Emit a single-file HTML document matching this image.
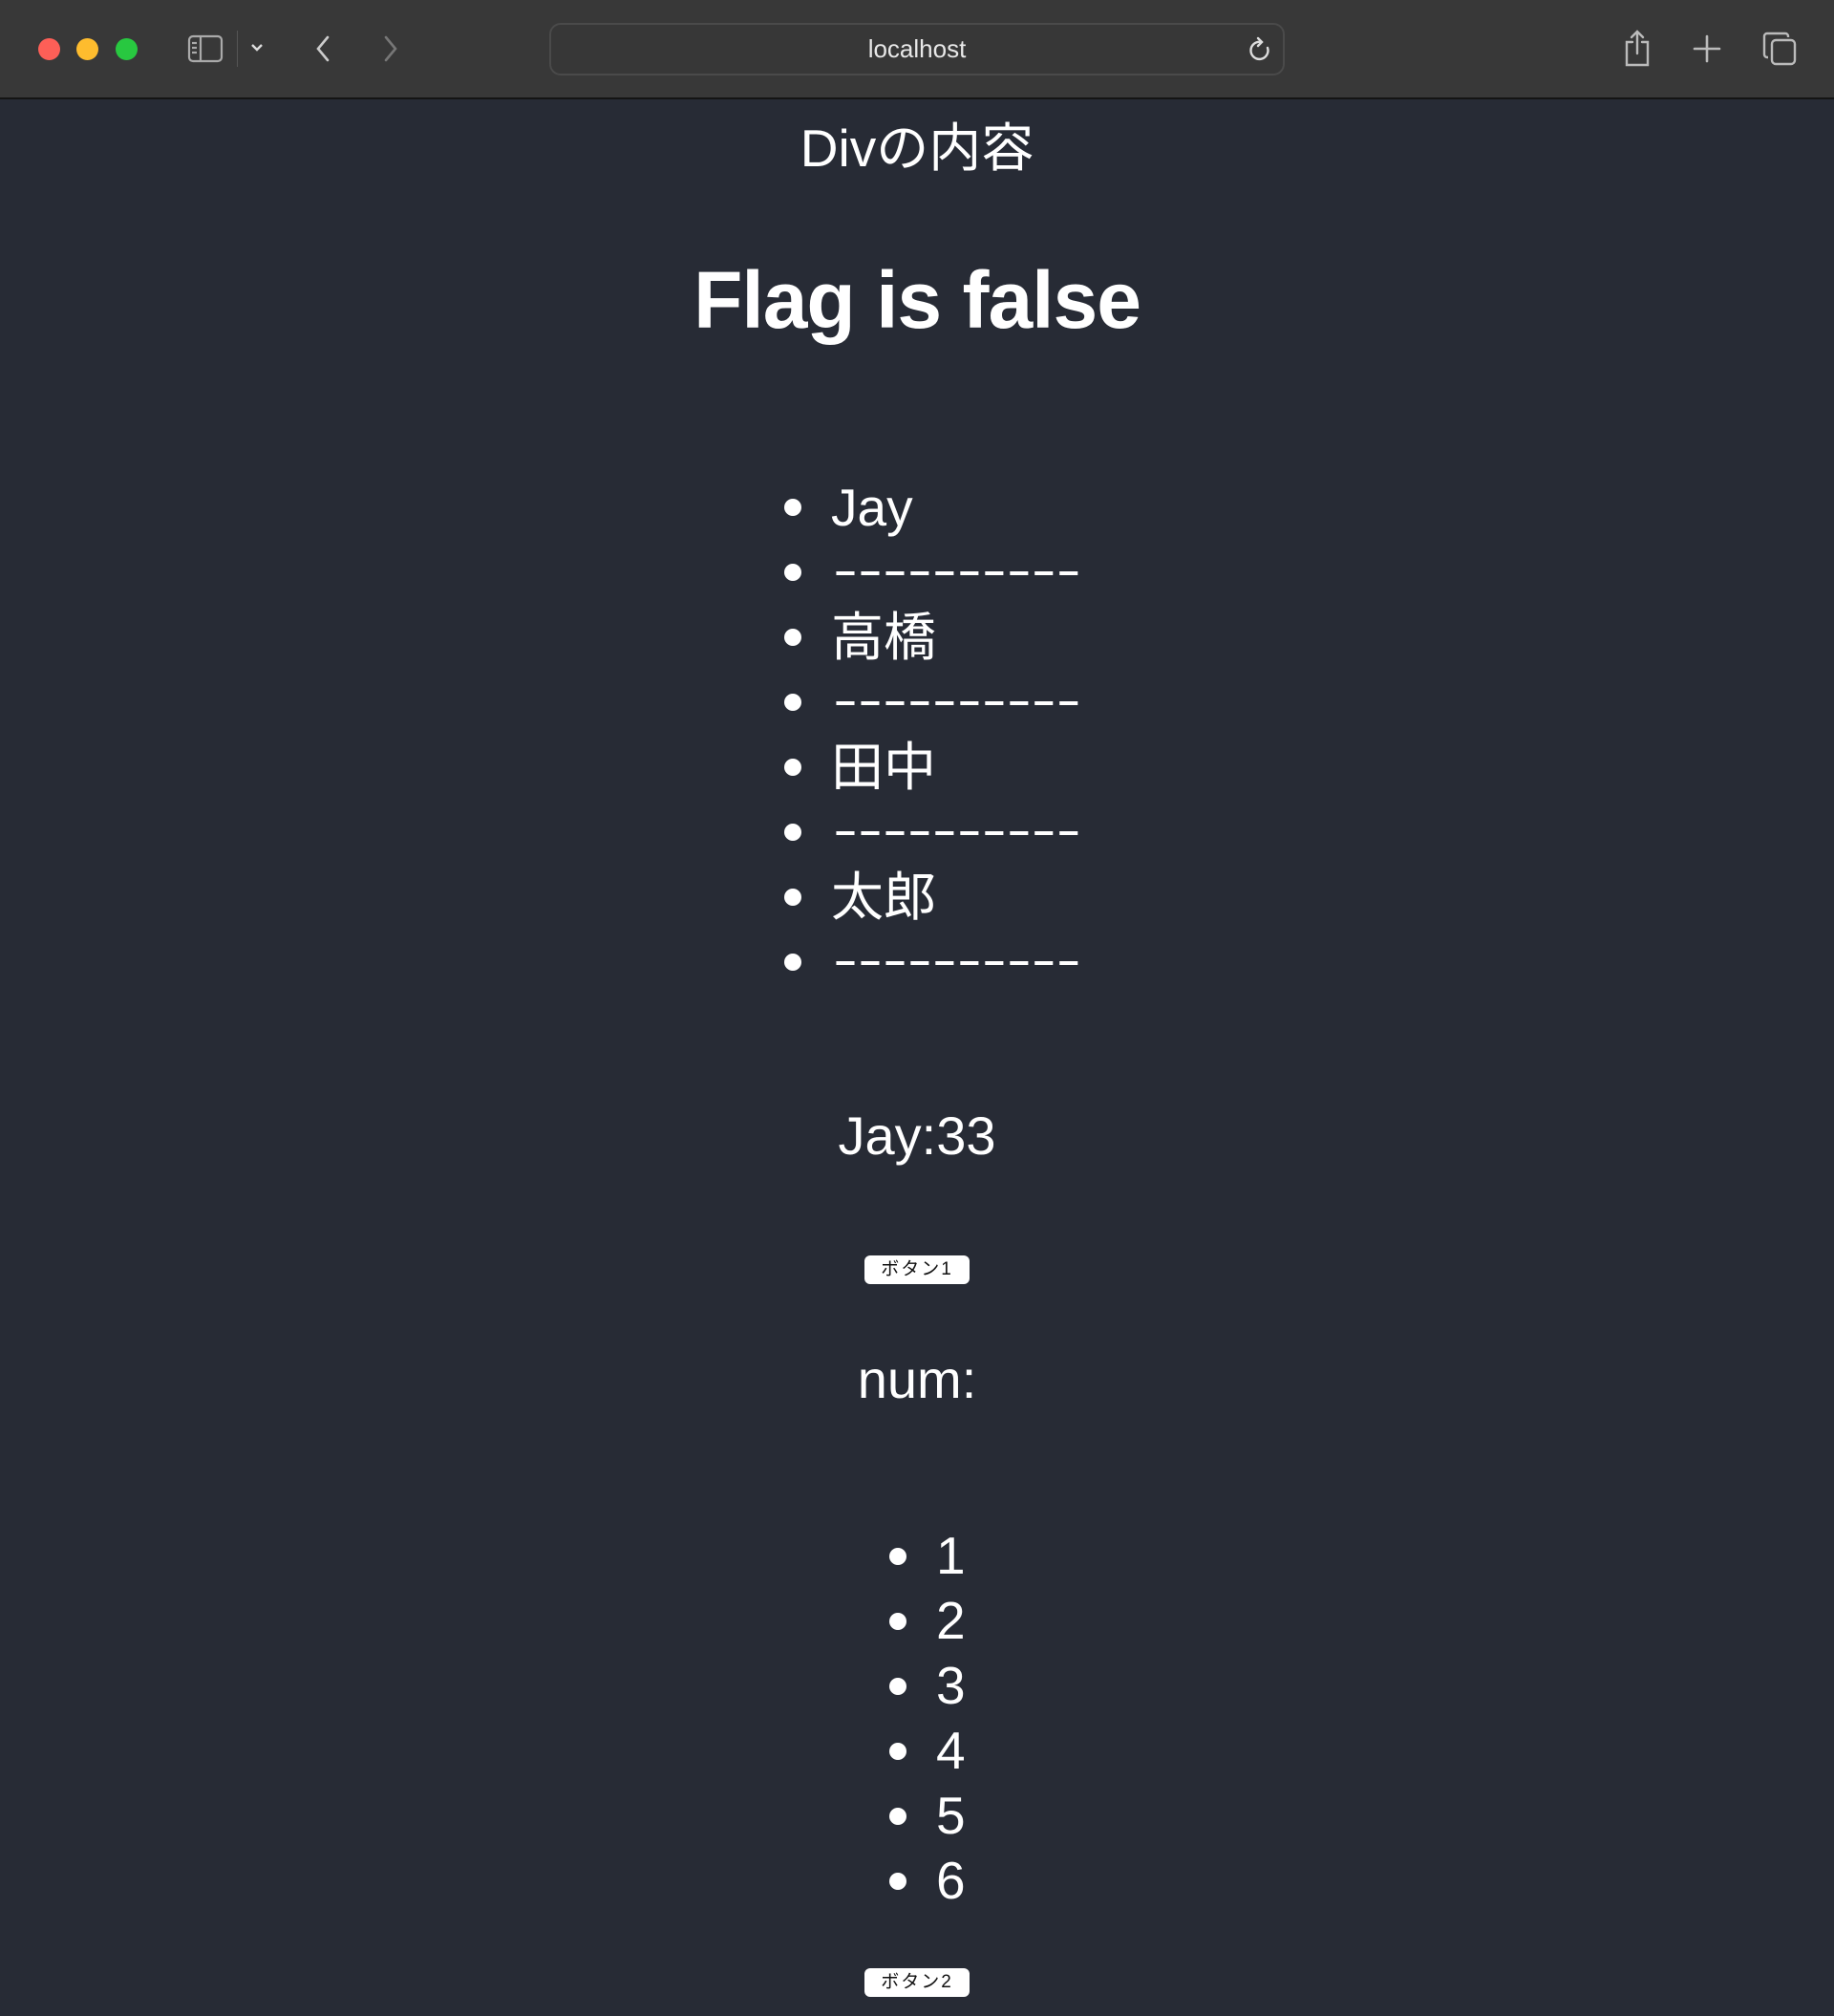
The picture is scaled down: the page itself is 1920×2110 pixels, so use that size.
<!DOCTYPE html>
<html><head><meta charset="utf-8"><style>
*{margin:0;padding:0;box-sizing:border-box}
body{width:1920px;height:2110px;background:#272b35;font-family:"Liberation Sans","Noto Sans CJK JP",sans-serif;color:#fff;position:relative;overflow:hidden}
.bar{position:absolute;left:0;top:0;width:1920px;height:104px;background:#383838;border-bottom:2px solid #141414}
.dot{position:absolute;top:40px;width:23px;height:23px;border-radius:50%}
.url{position:absolute;left:575px;top:24px;width:770px;height:55px;border:2px solid #4a4a4a;border-radius:12px;background:#373737;text-align:center;line-height:51px;font-size:26px;color:#e8e8e8}
.t{position:absolute;left:0;width:1920px;text-align:center;white-space:nowrap}
.li{position:absolute;font-size:55px;line-height:68px;white-space:nowrap}
.b{position:absolute;width:18px;height:18px;border-radius:50%;background:#fff}
.dash{transform:scaleX(1.5);transform-origin:0 0;font-size:52px}
.btn{position:absolute;left:905px;width:110px;height:30px;background:#fff;border-radius:6px;color:#111;font-size:19px;text-align:center;line-height:30px;letter-spacing:2px}
svg{position:absolute}
</style></head><body>
<div class="bar">
<div class="dot" style="left:40px;background:#fe5f57"></div>
<div class="dot" style="left:80px;background:#febc2e"></div>
<div class="dot" style="left:121px;background:#28c840"></div>
<svg style="left:196px;top:36px" width="38" height="30" viewBox="0 0 38 30" fill="none" stroke="#aaa" stroke-width="2.2"><rect x="2" y="2" width="34" height="26" rx="4"/><line x1="14" y1="2" x2="14" y2="28"/><line x1="5" y1="9" x2="10" y2="9"/><line x1="5" y1="14" x2="10" y2="14"/><line x1="5" y1="19" x2="10" y2="19"/></svg>
<div style="position:absolute;left:248px;top:32px;width:1px;height:38px;background:#555"></div>
<svg style="left:262px;top:45px" width="14" height="10" viewBox="0 0 14 10" fill="none" stroke="#ddd" stroke-width="2.4"><path d="M2 2l5 5 5-5"/></svg>
<svg style="left:328px;top:36px" width="20" height="30" viewBox="0 0 20 30" fill="none" stroke="#ccc" stroke-width="2.6" stroke-linecap="round"><path d="M15 3L5 15l10 12"/></svg>
<svg style="left:399px;top:36px" width="20" height="30" viewBox="0 0 20 30" fill="none" stroke="#777" stroke-width="2.6" stroke-linecap="round"><path d="M5 3l10 12L5 27"/></svg>
<div class="url">localhost</div>
<svg style="left:1307px;top:38px" width="26" height="30" viewBox="0 0 26 30" fill="none" stroke="#ddd" stroke-width="2.4" stroke-linecap="round"><path d="M20 12a9 9 0 1 1-7-6"/><path d="M10 2l4 4-4 4"/></svg>
<svg style="left:1698px;top:30px" width="32" height="40" viewBox="0 0 32 40" fill="none" stroke="#bbb" stroke-width="2.4" stroke-linecap="round"><path d="M11 14H5v24h22V14h-6"/><path d="M16 26V3M10 9l6-6 6 6"/></svg>
<svg style="left:1772px;top:36px" width="30" height="30" viewBox="0 0 30 30" stroke="#bbb" stroke-width="2.6" stroke-linecap="round"><path d="M15 2v26M2 15h26"/></svg>
<svg style="left:1845px;top:32px" width="36" height="38" viewBox="0 0 36 38" fill="none" stroke="#bbb" stroke-width="2.4"><rect x="10" y="10" width="24" height="25" rx="4"/><path d="M6 28H5a3 3 0 0 1-3-3V6a3 3 0 0 1 3-3h19a3 3 0 0 1 3 3v1"/></svg>
</div>

<div class="t" style="top:122px;font-size:55px;line-height:66px">Divの内容</div>
<div class="t" style="top:264px;font-size:84px;line-height:100px;font-weight:bold;letter-spacing:-1px">Flag is false</div>

<div class="b" style="left:821px;top:522px"></div><div class="li" style="left:870px;top:497px">Jay</div>
<div class="b" style="left:821px;top:590px"></div><div class="li dash" style="left:872px;top:563px">----------</div>
<div class="b" style="left:821px;top:658px"></div><div class="li" style="left:870px;top:633px">高橋</div>
<div class="b" style="left:821px;top:726px"></div><div class="li dash" style="left:872px;top:699px">----------</div>
<div class="b" style="left:821px;top:794px"></div><div class="li" style="left:870px;top:769px">田中</div>
<div class="b" style="left:821px;top:862px"></div><div class="li dash" style="left:872px;top:835px">----------</div>
<div class="b" style="left:821px;top:930px"></div><div class="li" style="left:870px;top:905px">太郎</div>
<div class="b" style="left:821px;top:998px"></div><div class="li dash" style="left:872px;top:971px">----------</div>

<div class="t" style="top:1155px;font-size:56px;line-height:68px">Jay:33</div>
<div class="btn" style="top:1314px">ボタン1</div>
<div class="t" style="top:1410px;font-size:56px;line-height:68px">num:</div>

<div class="b" style="left:931px;top:1620px"></div><div class="li" style="left:980px;top:1594px">1</div>
<div class="b" style="left:931px;top:1688px"></div><div class="li" style="left:980px;top:1662px">2</div>
<div class="b" style="left:931px;top:1756px"></div><div class="li" style="left:980px;top:1730px">3</div>
<div class="b" style="left:931px;top:1824px"></div><div class="li" style="left:980px;top:1798px">4</div>
<div class="b" style="left:931px;top:1892px"></div><div class="li" style="left:980px;top:1866px">5</div>
<div class="b" style="left:931px;top:1960px"></div><div class="li" style="left:980px;top:1934px">6</div>

<div class="btn" style="top:2060px">ボタン2</div>
</body></html>
